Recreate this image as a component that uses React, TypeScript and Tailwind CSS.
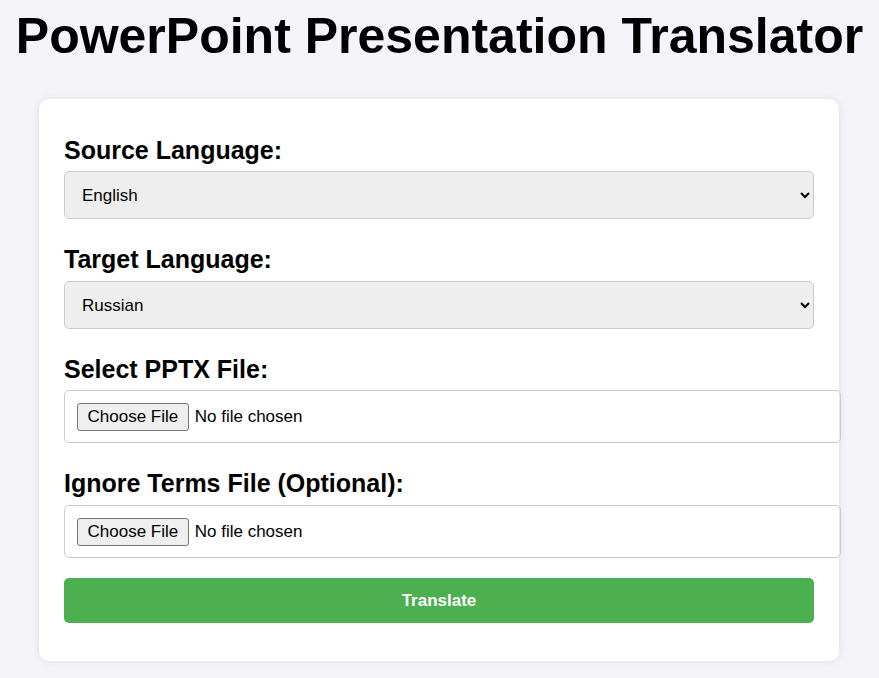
import React, { useState } from "react";

const languages = ["English", "Russian", "German", "French", "Spanish", "Chinese"];

const App: React.FC = () => {
  const [source, setSource] = useState("English");
  const [target, setTarget] = useState("Russian");

  return (
    <div className="min-h-screen bg-[#f4f4f9] font-['Liberation_Sans',Arial,sans-serif] text-black">
      <h1 className="pt-[8px] text-center text-[50px] font-bold leading-[56px]">
        PowerPoint Presentation Translator
      </h1>

      <form
        className="mt-[35px] ml-[39px] w-[800px] rounded-[10px] bg-white px-[25px] pt-[37px] pb-[38px] shadow-[0_0_10px_rgba(0,0,0,0.1)]"
        onSubmit={(e) => e.preventDefault()}
      >
        <label className="mb-[7px] block text-[25px] font-bold leading-[28px]">Source Language:</label>
        <select
          value={source}
          onChange={(e) => setSource(e.target.value)}
          className="mb-[26px] block h-[48px] w-full rounded-[5px] border border-[#ccc] bg-[#eee] px-[13px] text-[17px]"
        >
          {languages.map((l) => (
            <option key={l}>{l}</option>
          ))}
        </select>

        <label className="mb-[8px] block text-[25px] font-bold leading-[28px]">Target Language:</label>
        <select
          value={target}
          onChange={(e) => setTarget(e.target.value)}
          className="mb-[26px] block h-[48px] w-full rounded-[5px] border border-[#ccc] bg-[#eee] px-[13px] text-[17px]"
        >
          {languages.map((l) => (
            <option key={l}>{l}</option>
          ))}
        </select>

        <label className="mb-[7px] block text-[25px] font-bold leading-[28px]">Select PPTX File:</label>
        <input
          type="file"
          accept=".pptx"
          className="mb-[26px] block h-[53px] w-[777px] rounded-[5px] border border-[#ccc] p-[12px] text-[17px] leading-[27px] file:mr-[6px] file:rounded-[3px] file:border file:border-[#767676] file:bg-[#efefef] file:px-[9.5px] file:py-[3px] file:text-[17px] file:leading-[20px]"
        />

        <label className="mb-[8px] block text-[25px] font-bold leading-[28px]">Ignore Terms File (Optional):</label>
        <input
          type="file"
          className="mb-[20px] block h-[53px] w-[777px] rounded-[5px] border border-[#ccc] p-[12px] text-[17px] leading-[27px] file:mr-[6px] file:rounded-[3px] file:border file:border-[#767676] file:bg-[#efefef] file:px-[9.5px] file:py-[3px] file:text-[17px] file:leading-[20px]"
        />

        <button
          type="submit"
          className="block h-[45px] w-full rounded-[5px] bg-[#4caf50] text-[17px] font-bold text-white"
        >
          Translate
        </button>
      </form>
    </div>
  );
};

export default App;
